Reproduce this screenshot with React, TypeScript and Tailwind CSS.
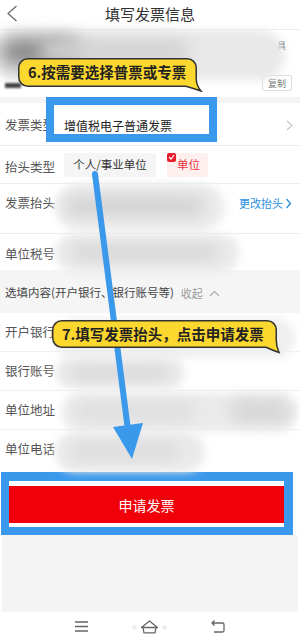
import React from "react";

function Label({ children }: { children: React.ReactNode }) {
  return <span className="text-[12.5px] leading-none text-[#555]">{children}</span>;
}

export default function App() {
  return (
    <div className="relative w-[300px] h-[643px] overflow-hidden bg-white flex flex-col font-['Noto_Sans_CJK_SC','Noto_Sans',sans-serif] text-[#333]">
      {/* header */}
      <div className="h-[30px] shrink-0 grid grid-cols-[40px_1fr_40px] items-center border-b border-[#ececec]">
        <div className="pl-[6px] pb-[3px] flex">
          <svg width="12" height="17" viewBox="0 0 12 17">
            <path d="M10.5 1 L2 8.5 L10.5 16" stroke="#666" strokeWidth="1.2" fill="none" />
          </svg>
        </div>
        <div className="text-center text-[15px] leading-none pb-[3px] text-[#333]">填写发票信息</div>
        <div />
      </div>

      {/* address block */}
      <div className="h-[67px] shrink-0 flex flex-col items-end pr-[8px]">
        <div className="mt-[11px] mr-[6px] text-[9px] leading-none text-[#444]">具</div>
        <div className="mt-auto mb-[6px] w-[30px] h-[16px] border border-[#ddd] rounded-[2px] flex items-center justify-center text-[9px] text-[#777] leading-none">
          复制
        </div>
      </div>
      <div className="h-[6px] shrink-0 bg-[#f4f4f4]" />

      {/* 发票类型 */}
      <div className="h-[43px] shrink-0 flex items-center justify-between pl-[5px] pr-[7px] pt-[3px] border-b border-[#eee]">
        <Label>发票类型</Label>
        <svg width="7" height="11" viewBox="0 0 7 11">
          <path d="M1 1 L6 5.5 L1 10" stroke="#c4c4c4" strokeWidth="1.1" fill="none" />
        </svg>
      </div>

      {/* 抬头类型 */}
      <div className="h-[38px] shrink-0 flex items-center pl-[5px] border-b border-[#eee]">
        <div className="w-[59px]">
          <Label>抬头类型</Label>
        </div>
        <div className="w-[92px] h-[24px] bg-[#f5f5f5] rounded-[2px] flex items-center justify-center text-[11.5px] text-[#333]">
          个人/事业单位
        </div>
        <div className="relative ml-[11px] w-[41px] h-[24px] bg-[#fff0f0] rounded-[2px] flex items-center justify-center pl-[2px] text-[11.5px] text-[#e8303a]">
          单位
          <div className="absolute left-0 top-0 w-[9px] h-[9px] bg-[#e81c2a] rounded-[2px] flex items-center justify-center">
            <svg width="7" height="6" viewBox="0 0 7 6">
              <path d="M1 3 L3 5 L6 1" stroke="#fff" strokeWidth="1.2" fill="none" />
            </svg>
          </div>
        </div>
      </div>

      {/* 发票抬头 */}
      <div className="h-[50px] shrink-0 flex items-center justify-between pl-[5px] pr-[8px] pb-[10px] border-b border-[#eee]">
        <Label>发票抬头</Label>
        <div className="flex items-center gap-[2px] text-[11px] leading-none text-[#2a8fe0]">
          更改抬头
          <svg width="7" height="11" viewBox="0 0 7 11">
            <path d="M1.5 1 L5.5 5.5 L1.5 10" stroke="#2a8fe0" strokeWidth="1.3" fill="none" />
          </svg>
        </div>
      </div>

      {/* 单位税号 */}
      <div className="h-[36px] shrink-0 flex items-center pl-[5px] pt-[4px]">
        <Label>单位税号</Label>
      </div>

      {/* 选填内容 */}
      <div className="h-[43px] shrink-0 flex items-center pl-[5px] pt-[3px] bg-[#f5f5f5]">
        <span className="text-[11.5px] leading-none text-[#444]">选填内容(开户银行、银行账号等)</span>
        <span className="ml-[7px] text-[11px] leading-none text-[#999]">收起</span>
        <svg className="ml-[6px]" width="11" height="7" viewBox="0 0 11 7">
          <path d="M1 6 L5.5 1.5 L10 6" stroke="#aaa" strokeWidth="1.1" fill="none" />
        </svg>
      </div>

      {["开户银行", "银行账号", "单位地址", "单位电话"].map((t, i) => (
        <div
          key={t}
          className={
            i < 3
              ? "h-[39px] shrink-0 flex items-center pl-[5px] border-b border-[#f0f0f0]"
              : "h-[39px] shrink-0 flex items-center pl-[5px]"
          }
        >
          <Label>{t}</Label>
        </div>
      ))}

      {/* submit button with highlight frame */}
      <div className="shrink-0 pt-[3px] pl-[1px]">
        <div className="w-[292px] border-[#3b99ec] border-t-[9px] border-b-[8px] border-l-[8px] border-r-[9px] bg-white pt-[5px] pb-[4px]">
          <div className="h-[37px] bg-[#f20009] flex items-center justify-center text-white text-[14px] leading-none">
            申请发票
          </div>
        </div>
      </div>
      <div className="flex-1 mx-[2px] bg-[#f4f4f4]" />

      {/* nav bar */}
      <div className="h-[31px] shrink-0 flex items-center justify-center gap-[44px] pb-[2px]">
        <svg width="13" height="11" viewBox="0 0 13 11">
          <path d="M0 1 H13 M0 5.5 H13 M0 10 H13" stroke="#666" strokeWidth="1.3" />
        </svg>
        <svg width="35" height="14" viewBox="0 0 35 14">
          <circle cx="2.5" cy="7.5" r="2.2" fill="#ececec" />
          <circle cx="32.5" cy="7.5" r="2.2" fill="#ececec" />
          <path d="M9.5 7.5 L17.5 1 L25.5 7.5 Z M11 7.5 L12 12.8 H23 L24 7.5" stroke="#666" strokeWidth="1.3" fill="none" strokeLinejoin="round" />
        </svg>
        <svg width="14" height="13" viewBox="0 0 14 13">
          <path d="M3.5 0.5 L1 3 L3.5 5.5 M1 3 H11.5 Q13 3 13 4.5 V10.5 Q13 12 11.5 12 H3" stroke="#666" strokeWidth="1.3" fill="none" />
        </svg>
      </div>

      {/* redaction smudges */}
      <div className="absolute left-[-10px] top-[30px] w-[295px] h-[50px] bg-[#e9e9e9] rounded-[30px] blur-[4px]" />
      <div className="absolute left-[0px] top-[38px] w-[80px] h-[28px] bg-[#8a8a8a] rounded-full blur-[9px]" />
      <div className="absolute left-[40px] top-[40px] w-[150px] h-[22px] bg-[#d2d2d2] rounded-full blur-[8px]" />
      <div className="absolute left-[5px] top-[83px] w-[16px] h-[5px] bg-[#444] blur-[1px]" />

      <div className="absolute left-[55px] top-[184px] w-[170px] h-[46px] bg-[#ececec] rounded-[24px] blur-[4px]" />
      <div className="absolute left-[65px] top-[196px] w-[140px] h-[20px] bg-[#d2d2d2] rounded-full blur-[8px]" />

      <div className="absolute left-[55px] top-[234px] w-[185px] h-[38px] bg-[#ececec] rounded-[20px] blur-[4px]" />
      <div className="absolute left-[70px] top-[244px] w-[150px] h-[16px] bg-[#d5d5d5] rounded-full blur-[8px]" />

      <div className="absolute left-[55px] top-[318px] w-[240px] h-[40px] bg-[#efefef] rounded-[20px] blur-[4px]" />

      <div className="absolute left-[55px] top-[358px] w-[130px] h-[30px] bg-[#ebebeb] rounded-[16px] blur-[4px]" />
      <div className="absolute left-[70px] top-[366px] w-[100px] h-[14px] bg-[#d8d8d8] rounded-full blur-[7px]" />

      <div className="absolute left-[62px] top-[393px] w-[235px] h-[38px] bg-[#ebebeb] rounded-[20px] blur-[4px]" />
      <div className="absolute left-[75px] top-[403px] w-[120px] h-[16px] bg-[#dcdcdc] rounded-full blur-[8px]" />
      <div className="absolute left-[230px] top-[400px] w-[60px] h-[22px] bg-[#d5d5d5] rounded-full blur-[8px]" />

      <div className="absolute left-[55px] top-[432px] w-[150px] h-[40px] bg-[#ebebeb] rounded-[20px] blur-[4px]" />
      <div className="absolute left-[70px] top-[443px] w-[110px] h-[16px] bg-[#dadada] rounded-full blur-[8px]" />

      {/* highlight on invoice type */}
      <div className="absolute left-[46px] top-[97px] w-[171px] h-[45px] border-[8px] border-[#3b99ec] bg-white flex items-start pt-[14px] pl-[10px] text-[12px] leading-[14px] text-[#222]">
        增值税电子普通发票
      </div>

      {/* arrow */}
      <svg className="absolute left-0 top-0 pointer-events-none" width="300" height="643" viewBox="0 0 300 643">
        <line x1="95" y1="174" x2="128" y2="430" stroke="#3b99ec" strokeWidth="6" strokeLinecap="round" />
        <polygon points="113,427 143,423 132,459" fill="#3b99ec" />
      </svg>

      {/* callout 6 */}
      <div className="absolute left-[18px] top-[58px] w-[185px] h-[34px]">
        <svg className="absolute left-0 top-0" width="185" height="34" viewBox="0 0 185 34">
          <path
            d="M9.75 0.75 H169.25 A9 9 0 0 1 178.25 9.75 V20 Q178 27 183 33 Q174 30 168 28.25 H9.75 A9 9 0 0 1 0.75 19.25 V9.75 A9 9 0 0 1 9.75 0.75 Z"
            fill="#fcd72e"
            stroke="#333"
            strokeWidth="1.5"
          />
        </svg>
        <div className="relative h-[29px] flex items-center pl-[10px] text-[14.5px] font-bold leading-none text-[#222]">
          6.按需要选择普票或专票
        </div>
      </div>

      {/* callout 7 */}
      <div className="absolute left-[52px] top-[320px] w-[230px] h-[34px]">
        <svg className="absolute left-0 top-0" width="230" height="34" viewBox="0 0 230 34">
          <path
            d="M9.75 0.75 H215.25 A9 9 0 0 1 224.25 9.75 V19 Q224 26 227 32.5 Q220 30 214 27.25 H9.75 A9 9 0 0 1 0.75 18.25 V9.75 A9 9 0 0 1 9.75 0.75 Z"
            fill="#fcd72e"
            stroke="#333"
            strokeWidth="1.5"
          />
        </svg>
        <div className="relative h-[28px] flex items-center pl-[10px] text-[14.5px] font-bold leading-none text-[#222]">
          7.填写发票抬头，点击申请发票
        </div>
      </div>
    </div>
  );
}
